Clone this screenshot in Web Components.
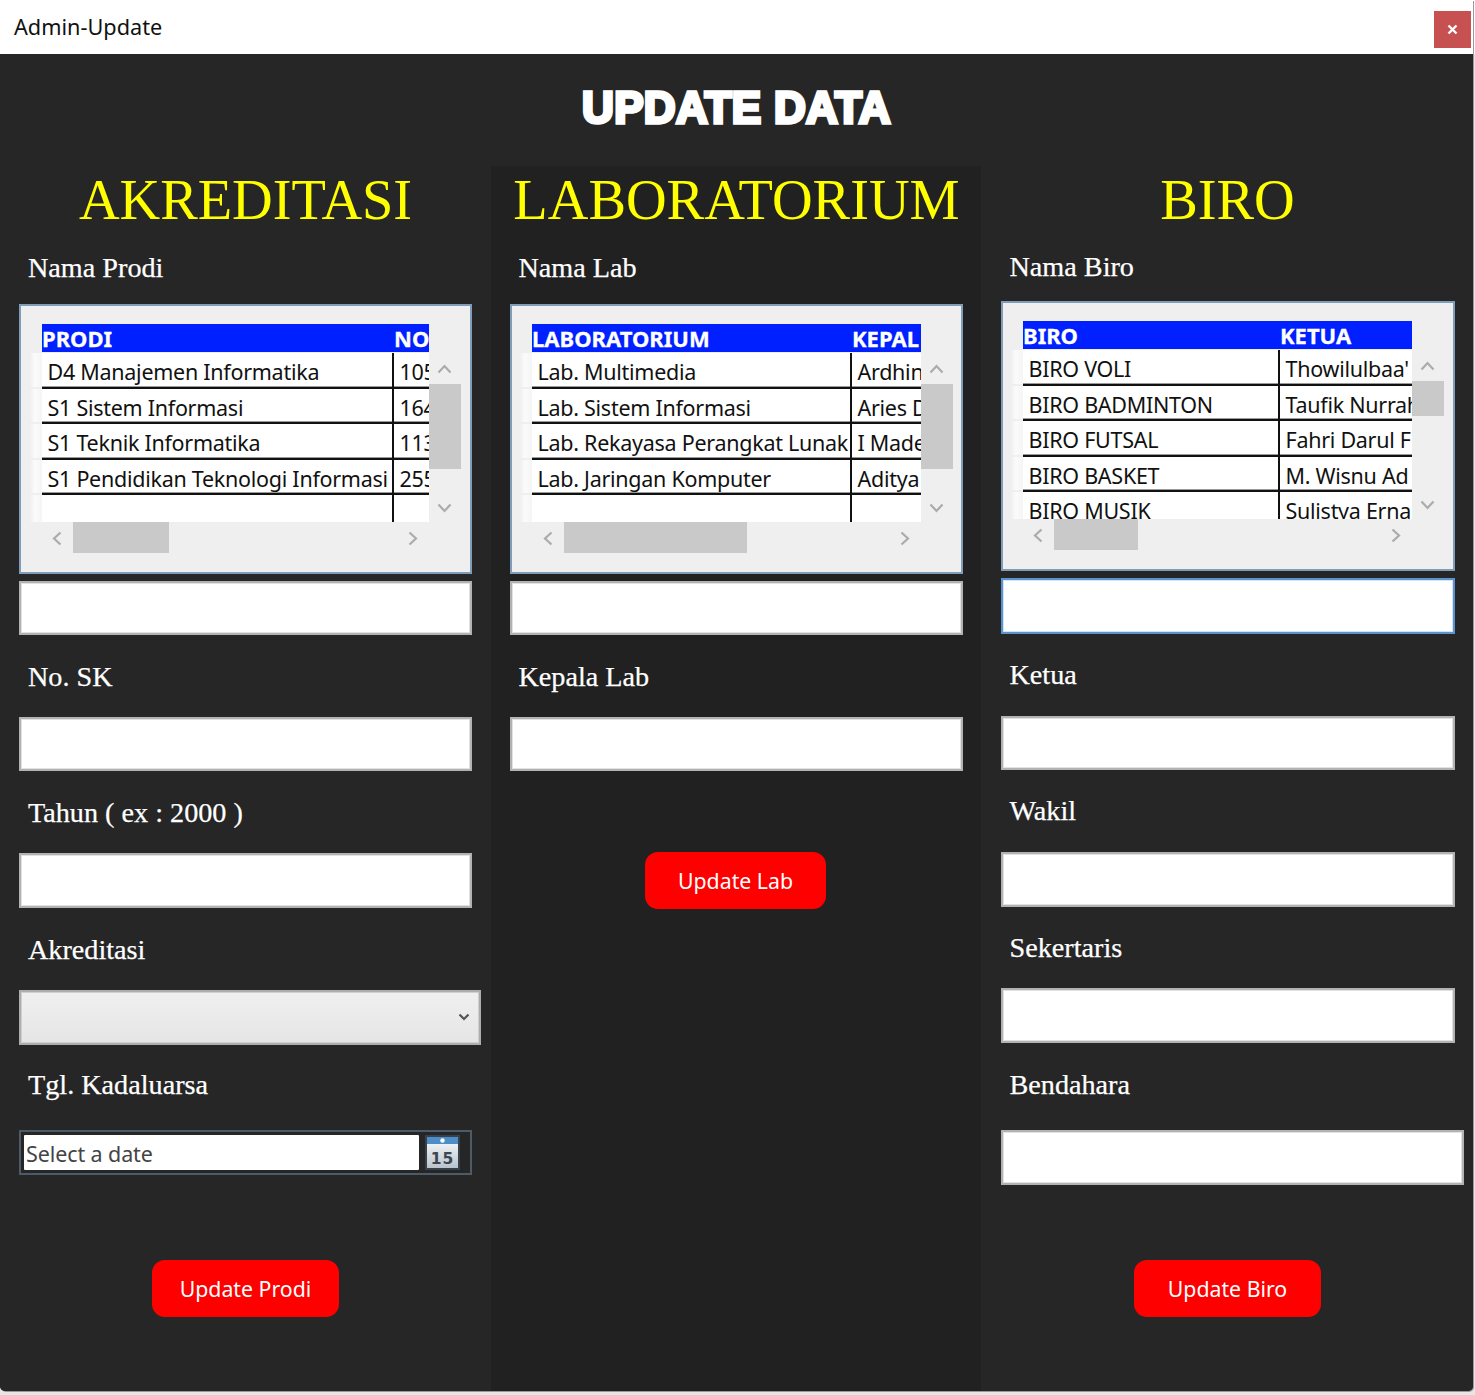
<!DOCTYPE html>
<html><head><meta charset="utf-8"><style>
html,body{margin:0;padding:0;background:#e6e6e6;}
body{font-family:"Noto Sans","Liberation Sans",sans-serif;}
</style></head><body>
<app-window>
  <title-bar slot="bar">Admin-Update</title-bar>
  <page-title slot="title">UPDATE DATA</page-title>

  <form-column style="padding-left:19px">
    <col-heading>AKREDITASI</col-heading>
    <field-label style="margin-top:16px;padding-left:9px">Nama Prodi</field-label>
    <data-grid c1="352" vw="399" vthumb="85" hthumb="96" style="margin-top:16px;--pl:9px">
      <grid-row head><grid-cell>PRODI</grid-cell><grid-cell>NO</grid-cell></grid-row>
      <grid-row><grid-cell>D4 Manajemen Informatika</grid-cell><grid-cell>105</grid-cell></grid-row>
      <grid-row><grid-cell>S1 Sistem Informasi</grid-cell><grid-cell>164</grid-cell></grid-row>
      <grid-row><grid-cell>S1 Teknik Informatika</grid-cell><grid-cell>113</grid-cell></grid-row>
      <grid-row><grid-cell>S1 Pendidikan Teknologi Informasi</grid-cell><grid-cell>255</grid-cell></grid-row>
      <grid-row><grid-cell></grid-cell><grid-cell></grid-cell></grid-row>
    </data-grid>
    <text-box style="margin-top:7px;height:54px"></text-box>
    <field-label style="margin-top:22px;padding-left:9px">No. SK</field-label>
    <text-box style="margin-top:20px;height:54px"></text-box>
    <field-label style="margin-top:22px;padding-left:9px">Tahun ( ex : 2000 )</field-label>
    <text-box style="margin-top:20px;height:55px"></text-box>
    <field-label style="margin-top:22px;padding-left:9px">Akreditasi</field-label>
    <combo-box style="margin-top:20px"></combo-box>
    <field-label style="margin-top:20px;padding-left:9px">Tgl. Kadaluarsa</field-label>
    <date-picker style="margin-top:25px">Select a date</date-picker>
    <red-button style="margin-top:85px;width:187px;margin-left:133px">Update Prodi</red-button>
  </form-column>

  <form-column alt style="padding-left:19px">
    <col-heading>LABORATORIUM</col-heading>
    <field-label style="margin-top:16px">Nama Lab</field-label>
    <data-grid c1="320" vw="401" vthumb="85" hthumb="183" style="margin-top:16px;--shp:11px">
      <grid-row head><grid-cell>LABORATORIUM</grid-cell><grid-cell>KEPAL</grid-cell></grid-row>
      <grid-row><grid-cell>Lab. Multimedia</grid-cell><grid-cell>Ardhin</grid-cell></grid-row>
      <grid-row><grid-cell>Lab. Sistem Informasi</grid-cell><grid-cell>Aries D</grid-cell></grid-row>
      <grid-row><grid-cell>Lab. Rekayasa Perangkat Lunak</grid-cell><grid-cell>I Made</grid-cell></grid-row>
      <grid-row><grid-cell>Lab. Jaringan Komputer</grid-cell><grid-cell>Aditya</grid-cell></grid-row>
      <grid-row><grid-cell></grid-cell><grid-cell></grid-cell></grid-row>
    </data-grid>
    <text-box style="margin-top:7px;height:54px"></text-box>
    <field-label style="margin-top:22px">Kepala Lab</field-label>
    <text-box style="margin-top:20px;height:54px"></text-box>
    <red-button style="margin-top:81px;width:181px;margin-left:135px">Update Lab</red-button>
  </form-column>

  <form-column>
    <col-heading>BIRO</col-heading>
    <field-label style="margin-top:15px">Nama Biro</field-label>
    <data-grid c1="257" vw="401" vthumb="35" hthumb="84" style="margin-top:14px;width:454px">
      <grid-row head><grid-cell>BIRO</grid-cell><grid-cell>KETUA</grid-cell></grid-row>
      <grid-row><grid-cell>BIRO VOLI</grid-cell><grid-cell>Thowilulbaa'</grid-cell></grid-row>
      <grid-row><grid-cell>BIRO BADMINTON</grid-cell><grid-cell>Taufik Nurrah</grid-cell></grid-row>
      <grid-row><grid-cell>BIRO FUTSAL</grid-cell><grid-cell>Fahri Darul F</grid-cell></grid-row>
      <grid-row><grid-cell>BIRO BASKET</grid-cell><grid-cell>M. Wisnu Ad</grid-cell></grid-row>
      <grid-row><grid-cell>BIRO MUSIK</grid-cell><grid-cell>Sulistya Erna</grid-cell></grid-row>
    </data-grid>
    <text-box focus style="margin-top:7px;height:56px;width:454px"></text-box>
    <field-label style="margin-top:21px">Ketua</field-label>
    <text-box style="margin-top:21px;height:54px;width:454px"></text-box>
    <field-label style="margin-top:21px">Wakil</field-label>
    <text-box style="margin-top:21px;height:55px;width:454px"></text-box>
    <field-label style="margin-top:21px">Sekertaris</field-label>
    <text-box style="margin-top:20px;height:55px;width:454px"></text-box>
    <field-label style="margin-top:22px">Bendahara</field-label>
    <text-box style="margin-top:25px;height:55px;width:463px"></text-box>
    <red-button style="margin-top:75px;width:187px;margin-left:133px">Update Biro</red-button>
  </form-column>
</app-window>

<script>
function def(name, html, init){
  customElements.define(name, class extends HTMLElement{
    constructor(){super();this.attachShadow({mode:'open'}).innerHTML=html;}
    connectedCallback(){ if(init) init(this); }
  });
}
const serif='"Liberation Serif","Times New Roman",serif';
const sans='"Noto Sans","Liberation Sans",sans-serif';

def('app-window',`<style>
:host{display:block;width:1475px;height:1395px;background:linear-gradient(#fff 54px,#e6e6e6 54px);overflow:hidden;box-sizing:border-box;}
.wrap{display:flex;flex-direction:column;height:1391px;width:1473px;background:#262626;border-radius:0 0 5px 5px;overflow:hidden;box-shadow:1px 1px 0 #9a9a9a;}
.cols{display:grid;grid-template-columns:491px 490px 492px;flex:1;min-height:0;}
</style><div class="wrap"><slot name="bar"></slot><slot name="title"></slot><div class="cols"><slot></slot></div></div>`);

def('title-bar',`<style>
:host{display:flex;align-items:center;justify-content:space-between;height:54px;background:#fff;color:#111;box-sizing:border-box;padding:0 2px 0 14px;font:21.7px ${sans};}
span{margin-top:-2px;}
.x{width:37px;height:37px;background:#c75050;color:#fff;display:flex;align-items:center;justify-content:center;margin-top:4px;}
</style><span><slot></slot></span><div class="x"><svg width="11" height="11" viewBox="0 0 11 11"><path d="M1.5 1.5L9.5 9.5M9.5 1.5L1.5 9.5" stroke="#fff" stroke-width="2.4" fill="none"/></svg></div>`);

def('page-title',`<style>
:host{display:flex;height:112px;align-items:center;justify-content:center;color:#fff;box-sizing:border-box;padding-bottom:5px;
font:900 44px/1 "Liberation Sans",sans-serif;-webkit-text-stroke:3.4px #fff;letter-spacing:.3px;}
span{display:inline-block;white-space:nowrap;}
</style><span><slot></slot></span>`);

def('form-column',`<style>
:host{display:flex;flex-direction:column;align-items:flex-start;padding:0 0 0 20px;box-sizing:border-box;background:#262626;min-width:0;}
:host([alt]){background:#212121;}
</style><slot></slot>`);

def('col-heading',`<style>
:host{display:block;height:66px;width:453px;text-align:center;color:#ffff00;font:56.3px/68px ${serif};white-space:nowrap;}
</style><slot></slot>`);

def('field-label',`<style>
:host{display:block;height:40px;padding-left:8.5px;color:#fff;font:28.2px/40px ${serif};-webkit-text-stroke:.25px #fff;white-space:nowrap;}
</style><slot></slot>`);

def('text-box',`<style>
:host{display:block;width:453px;box-sizing:border-box;background:#fff;border:2px solid #b2b2b2;box-shadow:inset 0 0 0 1px #e2e2e2;flex:none;}
:host([focus]){border-color:#5b93cf;box-shadow:inset 0 0 0 1px #d5e4f3;}
</style>`);

def('combo-box',`<style>
:host{display:flex;align-items:center;justify-content:flex-end;width:462px;height:55px;box-sizing:border-box;flex:none;
background:linear-gradient(#f0f0f0,#e5e5e5);border:2px solid #adadad;box-shadow:inset 0 0 0 1px #cfcfcf;padding:0 9px 2px 0;}
</style><svg width="12" height="8" viewBox="0 0 12 8"><path d="M1.5 1.5L6 6L10.5 1.5" stroke="#555" stroke-width="2.2" fill="none"/></svg>`);

def('date-picker',`<style>
:host{display:flex;align-items:center;width:453px;height:45px;box-sizing:border-box;flex:none;border:2px solid #4d5b69;padding:0 10px 0 3px;gap:6px;}
.in{flex:1;height:35px;background:#fff;color:#444;font:21.5px/37px ${sans};letter-spacing:-.1px;padding-left:2px;border-radius:1px;white-space:nowrap;}
</style><div class="in"><slot></slot></div>
<svg width="35" height="35" viewBox="0 0 35 35" role="img">
<defs><linearGradient id="g" x1="0" y1="0" x2="0" y2="1"><stop offset="0" stop-color="#fdfdfd"/><stop offset="1" stop-color="#b9c3cd"/></linearGradient></defs>
<rect x="0" y="0" width="35" height="35" fill="#37414b"/>
<rect x="2" y="2" width="31" height="31" fill="url(#g)"/>
<rect x="2" y="2" width="31" height="7" fill="#4d8dc8"/>
<circle cx="17.5" cy="5.5" r="2.2" fill="#fff"/>
<text x="17.5" y="29" text-anchor="middle" font-family="DejaVu Sans" font-size="15.5" font-weight="700" letter-spacing="1" fill="#3c4650">15</text></svg>`);

def('red-button',`<style>
:host{display:flex;align-items:center;justify-content:center;height:57px;background:#ff0000;color:#fff;border-radius:13px;font:21.3px ${sans};flex:none;white-space:nowrap;}
</style><slot></slot>`);

def('grid-row',`<style>
:host{display:flex;height:35.5px;box-sizing:border-box;}
.g{width:12px;flex:none;margin:0 0 2px 0;background:linear-gradient(90deg,#efefef 0,#fbfbfb 40%,#f5f5f5 100%);}
.r{display:flex;flex:1;background:#fff;border-bottom:2px solid #111;box-shadow:inset 0 -1px 0 #9a9a9a;box-sizing:border-box;height:100%;}
:host([head]){height:29px;}
:host([head]) .g{background:transparent;}
:host([head]) .r{background:#0020ff;border-bottom:0;box-shadow:none;color:#fff;height:28px;}
</style><div class="g"></div><div class="r"><slot></slot></div>`);

def('grid-cell',`<style>
:host{display:block;box-sizing:border-box;width:var(--c1);flex:none;padding-left:5.5px;height:100%;border-right:2px solid #111;font-size:21.5px;letter-spacing:-.27px;line-height:37px;color:#111;white-space:nowrap;}
:host(:last-child){width:auto;flex:1;border-right:0;}
:host-context(grid-row[head]){border-right:0;padding-left:0;color:#fff;font-size:22px;letter-spacing:0;line-height:29px;font-weight:700;-webkit-text-stroke:.3px #fff;}
:host-context(grid-row[head]):last-child{padding-left:2px;}
</style><slot></slot>`);

def('data-grid',`<style>
:host{display:block;flex:none;width:453px;height:270px;box-sizing:border-box;background:#efefef;border:2px solid #7f9db9;font-family:${sans};}
.g{display:grid;grid-template-columns:var(--vw) 31.5px;grid-template-rows:198px 32px;padding:18px 0 0 var(--pl,8px);}
.v{overflow:hidden;height:198px;width:var(--vw);}
.sv{display:flex;flex-direction:column;padding-top:30px;box-sizing:border-box;}
.sh{display:flex;padding-left:var(--shp,10px);box-sizing:border-box;}
.a{display:flex;align-items:center;justify-content:center;flex:none;}
.sv .a.u{height:30px}.sv .a.d{height:28px}
.sh .a.u{width:33px}.sh .a.d{width:33px}
.t{background:#c9c9c9;flex:none;}
.sv .t{height:var(--vt);}
.sh .t{width:var(--ht);height:31px;}
.sp{flex:1;}
</style><div class="g"><div class="v"><slot></slot></div>
<div class="sv"><div class="a u"><svg width="15" height="10" viewBox="0 0 15 10"><path d="M1.5 8.5L7.5 2L13.5 8.5" stroke="#ababab" stroke-width="2.2" fill="none"/></svg></div><div class="t"></div><div class="sp"></div><div class="a d"><svg width="15" height="10" viewBox="0 0 15 10"><path d="M1.5 1.5L7.5 8L13.5 1.5" stroke="#ababab" stroke-width="2.2" fill="none"/></svg></div></div>
<div class="sh"><div class="a u"><svg width="10" height="15" viewBox="0 0 10 15"><path d="M8.5 1.5L2 7.5L8.5 13.5" stroke="#ababab" stroke-width="2.2" fill="none"/></svg></div><div class="t"></div><div class="sp"></div><div class="a d"><svg width="10" height="15" viewBox="0 0 10 15"><path d="M1.5 1.5L8 7.5L1.5 13.5" stroke="#ababab" stroke-width="2.2" fill="none"/></svg></div></div>
<div></div></div>`, el=>{
  el.style.setProperty('--c1',el.getAttribute('c1')+'px');
  el.style.setProperty('--vw',el.getAttribute('vw')+'px');
  el.style.setProperty('--vt',el.getAttribute('vthumb')+'px');
  el.style.setProperty('--ht',el.getAttribute('hthumb')+'px');
});
</script>
</body></html>
